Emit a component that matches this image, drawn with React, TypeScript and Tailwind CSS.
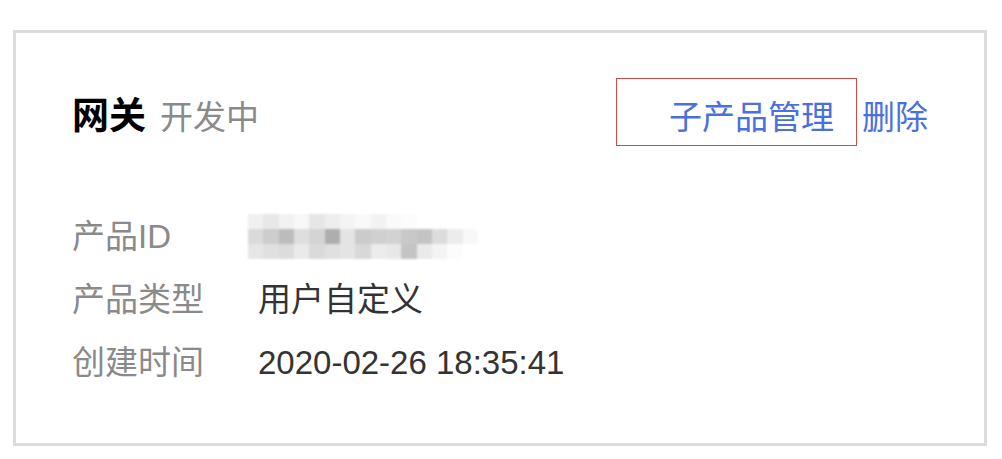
const FONT = "font-['Liberation_Sans','Noto_Sans_CJK_SC',sans-serif]";

// pixelated, blurred-out product id
const idRows: string[][] = [
  ["#f0f0f0", "#e8e8e8", "#f2f2f2", "#f8f8f8", "#e6e6e6", "#eeeeee", "#f4f4f4", "#f9f9f9", "#f2f2f2", "#fafafa", "#fcfcfc", "#ffffff", "#ffffff", "#ffffff", "#ffffff"],
  ["#dadada", "#cdcdcd", "#bcbcbc", "#dedede", "#d4d4d4", "#aeaeae", "#e4e4e4", "#cbcbcb", "#d0d0d0", "#d2d2d2", "#c8c8c8", "#c4c4c4", "#dcdcdc", "#ececec", "#f8f8f8"],
  ["#e6e6e6", "#e0e0e0", "#dcdcdc", "#eaeaea", "#dadada", "#e0e0e0", "#e4e4e4", "#d8d8d8", "#ececec", "#e8e8e8", "#c4c4c4", "#eaeaea", "#f4f4f4", "#fcfcfc", "#ffffff"],
];

function BlurredId() {
  return (
    <div className="relative flex h-[45px] w-[230px] flex-col overflow-hidden rounded-r-full blur-[1px]">
      {idRows.map((row, i) => (
        <div key={i} className="flex flex-1">
          {row.map((c, j) => (
            <div key={j} className="flex-1" style={{ backgroundColor: c }} />
          ))}
        </div>
      ))}
    </div>
  );
}

function Row({ label, children }: { label: string; children: React.ReactNode }) {
  return (
    <div className="flex h-[63px] items-center">
      <div className="w-[186px] text-[33px] text-[#8a8a8a]">{label}</div>
      <div className="text-[33px] text-[#333333]">{children}</div>
    </div>
  );
}

export default function App() {
  return (
    <div className={`h-[459px] w-[1002px] bg-white ${FONT}`}>
      <div className="ml-[13px] pt-[30px]">
        <div className="h-[416px] w-[974px] border-[3px] border-[#dcdcdc] bg-white px-[56px] pt-[45px]">
          <div className="flex h-[68px] items-center justify-between">
            <div className="flex items-baseline pt-[10px]">
              <span className="text-[37px] font-bold text-black">网关</span>
              <span className="ml-[14px] text-[33px] text-[#8a8a8a]">开发中</span>
            </div>
            <div className="flex items-center">
              <div className="flex h-[68px] w-[241px] items-center justify-end border border-[#d04a4a] pr-[22px] pt-[11px]">
                <span className="text-[33px] text-[#4a6fde]">子产品管理</span>
              </div>
              <span className="ml-[5px] pt-[11px] text-[33px] text-[#4a6fde]">删除</span>
            </div>
          </div>

          <div className="mt-[59px]">
            <Row label="产品ID">
              <div className="-ml-[10px]">
                <BlurredId />
              </div>
            </Row>
            <Row label="产品类型">用户自定义</Row>
            <Row label="创建时间">2020-02-26 18:35:41</Row>
          </div>
        </div>
      </div>
    </div>
  );
}
